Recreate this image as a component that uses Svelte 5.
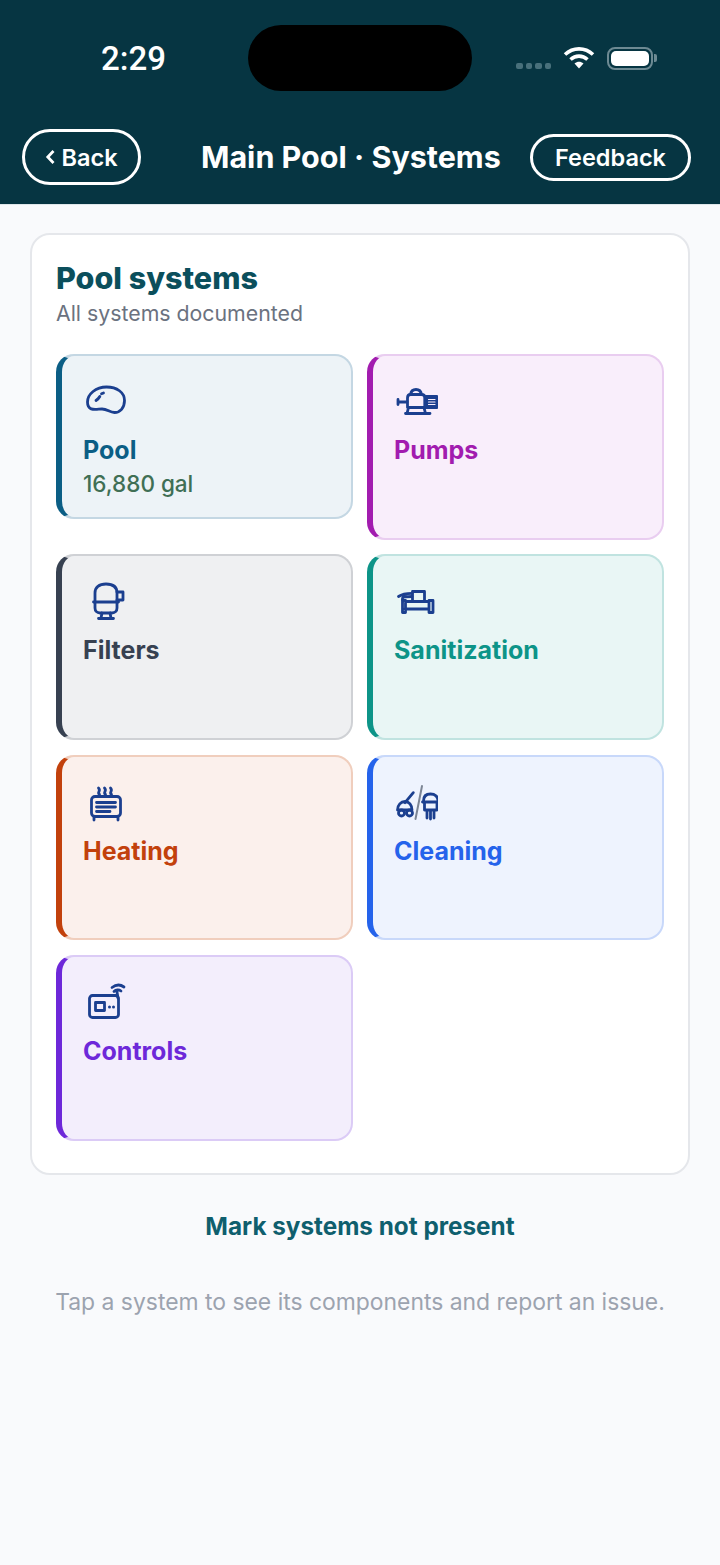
<script>
    const systems = [
        { name: 'Pool', icon: 'pool', sub: '16,880 gal', color: '#0b5e85', bg: '#edf3f7', line: '#c4d7e3', short: true },
        { name: 'Pumps', icon: 'pumps', color: '#a21caf', bg: '#f9eefb', line: '#e9cdf0' },
        { name: 'Filters', icon: 'filters', color: '#374151', bg: '#eff0f2', line: '#cfd1d5' },
        { name: 'Sanitization', icon: 'sanitization', color: '#0d9488', bg: '#e9f6f5', line: '#c0e3e0' },
        { name: 'Heating', icon: 'heating', color: '#c2410c', bg: '#fbf0ec', line: '#f0cebd' },
        { name: 'Cleaning', icon: 'cleaning', color: '#2563eb', bg: '#eef3fe', line: '#c8d8fa' },
        { name: 'Controls', icon: 'controls', color: '#6d28d9', bg: '#f3eefc', line: '#dbcbf6' }
    ];
</script>

<main>
    <header>
        <div class="status">
            <span class="time">2:29</span>
            <div class="island"></div>
            <div class="dots"><i></i><i></i><i></i><i></i></div>
            <svg class="wifi" width="32" height="24" viewBox="0 0 32 24">
                <path d="M2 8.5C10 1 22 1 30 8.500" fill="none" stroke="#fff" stroke-width="3.600" />
                <path d="M7.500 13.500C12.500 9 19.500 9 24.500 13.500" fill="none" stroke="#fff" stroke-width="3.600" />
                <path d="M11.500 17.500C14.500 15 17.500 15 20.500 17.500L16 22.500Z" fill="#fff" />
            </svg>
            <div class="battery"><div class="level"></div></div>
            <div class="nub"></div>
        </div>
        <nav>
            <button class="back">
                <svg width="11" height="16" viewBox="0 0 11 16"><path d="M8.500 2L2.800 8L8.500 14" fill="none" stroke="#fff" stroke-width="2.800" /></svg>
                Back
            </button>
            <h1>Main Pool · Systems</h1>
            <button class="feedback">Feedback</button>
        </nav>
    </header>

    <section class="panel">
        <h2>Pool systems</h2>
        <p class="summary">All systems documented</p>
        <div class="grid">
            {#each systems as s}
                <div class="tile" class:short={s.short} style="--c:{s.color};background:{s.bg};border-color:{s.line};border-left-color:{s.color}">
                    <svg class="icon" width="44" height="44" viewBox="0 0 44 44">
                        {#if s.icon === 'pool'}
                            <path d="M4.500 23C4.500 15 13 8 23.500 8C34 8 41.500 13.500 41.500 21.500C41.500 29 37 33.500 31.500 33.500C26.500 33.500 24.500 30 19 30C13.500 30 4.500 33 4.500 23Z" />
                            <path d="M13 21.500C14.500 20.500 16 19 16.800 17.500M18.500 14.800L20.500 14" />
                        {:else if s.icon === 'pumps'}
                            <path d="M13.500 27V19C13.500 16.500 15 15.500 16.500 15.500C17 12 19 10.500 22 10.500C25 10.500 27 12 27.500 15.500C29.500 15.500 31 16.500 31 19V27" />
                            <path d="M16.500 15.500H27.500M4 23H13M4 20.500V25.500M13.500 28.500H31M11.500 34.500H36M14.500 28.500L13 34.500M30 28.500L31.500 34.500" />
                            <path class="solid" d="M31 17.500H43V28.500H31Z" />
                            <path class="cut" d="M34.500 20.500H41M34.500 23H41M34.500 25.500H41" />
                        {:else if s.icon === 'filters'}
                            <path d="M12 23V14C12 8 16 5 23 5C30 5 34 8 34 14V29C34 32 32 34 29 34H17C14 34 12 32 12 29Z" />
                            <path d="M10.500 23H35.500M34 13H40V21H34M19 34L18 39M27 34L28 39M15.500 39.500H30.500" />
                        {:else if s.icon === 'sanitization'}
                            <path d="M18.500 22V12.500H30.500V22M11 22.500H35M11 30H35M8.500 21.500V33.500H11.500V21.500ZM35 21.500V33.500H39V21.500Z" />
                            <path d="M4.500 17.500C8 15 12 14.300 18 14.300M8.500 21V19.500C8.500 18 11 17.500 18 17.500" />
                        {:else if s.icon === 'heating'}
                            <rect x="8.500" y="16.500" width="29" height="20" rx="3.500" />
                            <path d="M13.500 22.500H32.500M13.500 27H32.500M13.500 31.500H27M11 37V40M35 37V40" />
                            <path d="M16.500 14.500C13.500 12.500 18.500 11 15.500 8M22.500 14.500C19.500 12.500 24.500 11 21.500 8M28.500 14.500C25.500 12.500 30.500 11 27.500 8" />
                        {:else if s.icon === 'cleaning'}
                            <path d="M19.300 12.700L11 22.700M3.500 30C3.500 25 7 21.500 11 21.500C15 21.500 18 25 18 30ZM3.500 30H18" />
                            <circle cx="7.500" cy="33" r="3" />
                            <circle cx="15.500" cy="33" r="3" />
                            <path class="grey" d="M28 6L21.500 39" />
                            <path d="M29.500 22V21C29.500 16.500 32 14 36.500 14C41 14 44 16.500 44 21V22M28.500 22H44.500M30.500 22V30H43V22M33 30V38M36.500 30V39M40 30V38" />
                        {:else}
                            <rect x="6.500" y="15.500" width="29" height="22" rx="3" />
                            <rect x="12.500" y="22.500" width="9" height="8" />
                            <circle class="dot" cx="26.500" cy="27" r="1.500" />
                            <circle class="dot" cx="30.500" cy="27" r="1.500" />
                            <path d="M35 18L34 12M31 11.500C33 9.500 36 9.500 38 11M29 7.500C33 4.500 37.500 4.500 41 7" />
                        {/if}
                    </svg>
                    <div class="name">{s.name}</div>
                    {#if s.sub}<div class="sub">{s.sub}</div>{/if}
                </div>
            {/each}
        </div>
    </section>

    <div class="mark">Mark systems not present</div>
    <p class="hint">Tap a system to see its components and report an issue.</p>
</main>

<style>
    :global(body) {
        margin: 0;
        background: #f9fafc;
        font-family: Inter, "Liberation Sans", sans-serif;
    }

    main {
        min-height: 1565px;
        background: #f9fafc;
    }

    header {
        background: #063542;
        height: 205px;
        box-sizing: border-box;
        padding-top: 25px;
        border-bottom: 1px solid #dfe7ea;
    }

    .status {
        display: flex;
        align-items: center;
        height: 66px;
    }

    .time {
        margin-left: 101px;
        width: 147px;
        color: #fff;
        font-size: 33px;
        font-weight: 500;
        font-family: Roboto, "Liberation Sans", sans-serif;
    }

    .island {
        width: 224px;
        height: 66px;
        border-radius: 33px;
        background: #000;
    }

    .dots {
        display: flex;
        gap: 3px;
        margin-left: 44px;
        margin-top: 16px;
    }

    .dots i {
        width: 6.500px;
        height: 6.500px;
        border-radius: 2px;
        background: #48707b;
    }

    .wifi {
        margin-left: 12px;
    }

    .battery {
        margin-left: 12px;
        box-sizing: border-box;
        width: 46px;
        height: 23px;
        padding: 2px;
        border: 2px solid #6d8a93;
        border-radius: 8px;
    }

    .level {
        height: 100%;
        border-radius: 5px;
        background: #fff;
    }

    .nub {
        width: 2.500px;
        height: 8px;
        margin-left: 1px;
        border-radius: 0 2px 2px 0;
        background: #6d8a93;
    }

    nav {
        display: flex;
        align-items: center;
        margin-top: 38px;
        padding: 0 29px 0 22px;
    }

    h1 {
        margin: -1px 0 0 60px;
        color: #fff;
        font-size: 30.500px;
        font-weight: 700;
        white-space: nowrap;
    }

    button {
        box-sizing: border-box;
        display: flex;
        align-items: center;
        justify-content: center;
        padding: 0;
        background: none;
        border: 3px solid #fff;
        color: #fff;
        font-family: inherit;
        font-size: 23.500px;
        font-weight: 600;
    }

    .back {
        gap: 5px;
        width: 119px;
        height: 56px;
        border-radius: 28px;
    }

    .feedback {
        width: 161px;
        height: 47px;
        margin-left: auto;
        border-radius: 24px;
    }

    .panel {
        box-sizing: border-box;
        height: 942px;
        margin: 28px 30px 0;
        padding: 25px 24px 0;
        background: #fff;
        border: 2px solid #e5e7eb;
        border-radius: 20px;
    }

    h2 {
        margin: 0;
        color: #0b4f5c;
        font-size: 30.500px;
        line-height: 36px;
        font-weight: 800;
    }

    .summary {
        margin: 4px 0 0;
        color: #6b7280;
        font-size: 21.300px;
        line-height: 26px;
    }

    .grid {
        display: grid;
        grid-template-columns: 297px 297px;
        grid-auto-rows: 185.830px;
        column-gap: 14px;
        row-gap: 14.500px;
        margin-top: 28px;
    }

    .tile {
        box-sizing: border-box;
        padding: 23px 0 0 21px;
        border: 2px solid;
        border-left-width: 6px;
        border-radius: 18px;
    }

    .tile.short {
        height: 165px;
    }

    .icon {
        display: block;
        fill: none;
        stroke: #1b3f8f;
        stroke-width: 2.800;
        stroke-linecap: round;
        stroke-linejoin: round;
    }

    .icon .solid {
        fill: #1b3f8f;
    }

    .icon .dot {
        fill: #1b3f8f;
        stroke: none;
    }

    .icon .cut {
        stroke: #f9eefb;
        stroke-width: 1.200;
    }

    .icon .grey {
        stroke: #7c8594;
        stroke-width: 2;
    }

    .name {
        margin-top: 8px;
        color: var(--c);
        font-size: 25px;
        line-height: 38px;
        font-weight: 700;
    }

    .sub {
        margin-top: -2px;
        color: #3f6f55;
        font-size: 22.500px;
        line-height: 34px;
        font-weight: 500;
    }

    .mark {
        margin-top: 36px;
        text-align: center;
        color: #0f5f6e;
        font-size: 24.300px;
        line-height: 30px;
        font-weight: 700;
    }

    .hint {
        margin: 46px 0 0;
        text-align: center;
        color: #9ca3af;
        font-size: 22.900px;
        line-height: 30px;
    }
</style>
